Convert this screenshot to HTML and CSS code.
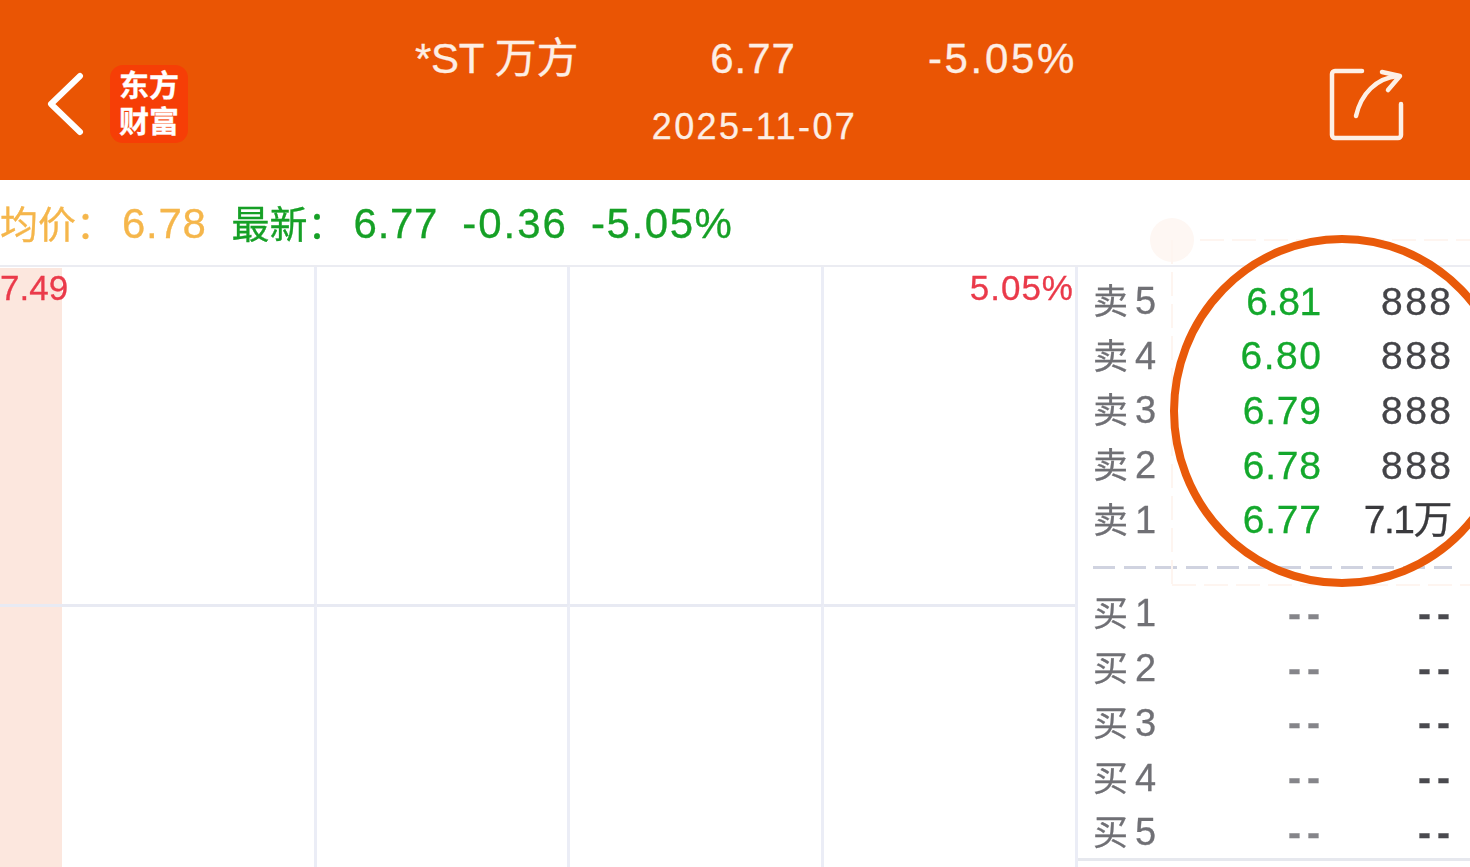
FILE: index.html
```html
<!DOCTYPE html>
<html lang="zh-CN">
<head>
<meta charset="utf-8">
<title>*ST万方</title>
<link rel="stylesheet" href="styles.css">
</head>
<body>
<div class="page">
  <header class="topbar">
    <svg class="back" viewBox="0 0 40 64" aria-hidden="true"><path d="M34 4 L5 32 L34 60"/></svg>
    <div class="logo"><span>东方</span><span>财富</span></div>
    <div class="headline">
      <div class="quote">
        <span class="q-name">*ST 万方</span>
        <span class="q-price">6.77</span>
        <span class="q-change">-5.05%</span>
      </div>
      <div class="q-date">2025-11-07</div>
    </div>
    <svg class="share" viewBox="0 0 80 76" aria-hidden="true">
      <path d="M36 5H9a3 3 0 0 0-3 3v61a3 3 0 0 0 3 3h63a3 3 0 0 0 3-3V38"/>
      <path d="M30 50C35 28 50 12 72 10"/>
      <path d="M56 6L74 10L62 24"/>
    </svg>
  </header>

  <div class="infobar">
    <span class="avg label">均价<span class="colon">：</span></span><span class="avg avg-v">6.78</span>
    <span class="latest label l-label">最新<span class="colon">：</span></span><span class="latest l-v1">6.77</span><span class="latest l-v2">-0.36</span><span class="latest l-v3">-5.05%</span>
  </div>

  <main class="body">
    <section class="chart">
      <div class="band"></div>
      <span class="axis axis-left">7.49</span>
      <span class="axis axis-right">5.05%</span>
      <div class="cell"></div><div class="cell"></div><div class="cell"></div><div class="cell last"></div>
      <div class="cell low"></div><div class="cell low"></div><div class="cell low"></div><div class="cell low last"></div>
    </section>
    <aside class="book">
      <div class="rows">
        <div class="row"><span class="lab"><i>卖</i>5</span><span class="price tight">6.81</span><span class="vol">888</span></div>
        <div class="row"><span class="lab"><i>卖</i>4</span><span class="price">6.80</span><span class="vol">888</span></div>
        <div class="row"><span class="lab"><i>卖</i>3</span><span class="price mid">6.79</span><span class="vol">888</span></div>
        <div class="row"><span class="lab"><i>卖</i>2</span><span class="price mid">6.78</span><span class="vol">888</span></div>
        <div class="row"><span class="lab"><i>卖</i>1</span><span class="price mid">6.77</span><span class="vol dark">7.1万</span></div>
      </div>
      <div class="divider"></div>
      <div class="rows">
        <div class="row"><span class="lab"><i>买</i>1</span><span class="price none">--</span><span class="vol none">--</span></div>
        <div class="row"><span class="lab"><i>买</i>2</span><span class="price none">--</span><span class="vol none">--</span></div>
        <div class="row"><span class="lab"><i>买</i>3</span><span class="price none">--</span><span class="vol none">--</span></div>
        <div class="row"><span class="lab"><i>买</i>4</span><span class="price none">--</span><span class="vol none">--</span></div>
        <div class="row"><span class="lab"><i>买</i>5</span><span class="price none">--</span><span class="vol none">--</span></div>
      </div>
      <div class="bookend"></div>
    </aside>
  </main>

  <svg class="overlay" viewBox="0 0 1470 867" aria-hidden="true">
    <circle class="ghost-dot" cx="1172" cy="240" r="22"/>
    <path class="ghost-line" d="M1172 240V590M1200 240H1470M1172 585H1470"/>
    <ellipse class="ring" cx="1342" cy="411" rx="168" ry="172"/>
  </svg>
</div>
</body>
</html>
```

FILE: styles.css
```css
* { box-sizing: border-box; }
html, body { margin: 0; padding: 0; }
html { background: linear-gradient(#ea5504 0 180px, #fff 180px); }
body { overflow: hidden; }
.page {
  position: relative;
  width: 1470px;
  height: 867px;
  overflow: hidden;
  font-family: "Liberation Sans", "Noto Sans CJK SC", sans-serif;
  -webkit-text-stroke: 0.3px currentColor;
  filter: blur(0.7px);
}

.topbar {
  height: 180px;
  background: #ea5504;
  display: flex;
  align-items: center;
  padding-left: 46px;
  color: #fff;
}
.back { width: 40px; height: 64px; margin-top: 28px; flex: none; }
.back path { fill: none; stroke: #fff; stroke-width: 6; stroke-linecap: round; stroke-linejoin: round; }
.logo {
  flex: none;
  width: 78px;
  height: 78px;
  margin-left: 24px;
  margin-top: 28px;
  border-radius: 13px;
  background: #f63e06;
  display: flex;
  flex-direction: column;
  align-items: center;
  justify-content: center;
  font-size: 30px;
  line-height: 36px;
  font-weight: 700;
}
.logo span { display: block; }
.headline {
  flex: 1;
  margin-right: 8px;
  margin-top: 16px;
  display: flex;
  flex-direction: column;
  align-items: stretch;
}
.quote {
  display: grid;
  grid-template-columns: 1fr auto 1fr;
  column-gap: 134px;
  font-size: 42px;
  line-height: 50px;
  color: #fdeee4;
  margin-top: -13px;
}
.q-name { justify-self: end; margin-right: -2px; letter-spacing: -0.3px; }
.q-price { letter-spacing: 1px; }
.q-change { justify-self: start; letter-spacing: 2.7px; margin-left: -2px; }
.q-date {
  text-align: center;
  font-size: 36px;
  line-height: 44px;
  margin-top: 21px;
  padding-left: 3px;
  letter-spacing: 2.4px;
  color: #fdeee4;
}
.share { flex: none; width: 80px; height: 76px; margin-right: 64px; margin-top: 28px; }
.share path { fill: none; stroke: #fdf0e6; stroke-width: 4.5; stroke-linecap: round; stroke-linejoin: round; }

.infobar {
  height: 87px;
  padding-top: 2px;
  border-bottom: 2px solid #ebecf2;
  display: flex;
  align-items: center;
  font-size: 42px;
  white-space: nowrap;
}
.label { font-size: 38px; margin-top: -5px; }
.colon { font-family: "Noto Sans CJK TC", sans-serif; }
.avg { color: #f5b64b; }
.avg-v { margin-left: 8px; letter-spacing: 0.7px; }
.latest { color: #16a026; }
.l-label { margin-left: 25px; }
.l-v1 { margin-left: 8px; letter-spacing: 0.7px; }
.l-v2 { margin-left: 24px; letter-spacing: 2px; }
.l-v3 { margin-left: 23px; letter-spacing: 1.6px; }

.body { display: flex; height: 600px; }
.chart {
  position: relative;
  width: 1075px;
  flex: none;
  display: grid;
  grid-template-columns: 317px 253px 254px 1fr;
  grid-template-rows: 337px 1fr;
}
.cell { border-right: 3px solid #ebedf6; }
.cell.last { border-right: 0; }
.cell.low { border-top: 3px solid #e8eaf3; }
.band {
  position: absolute;
  z-index: -1;
  left: 0;
  top: 1px;
  bottom: 0;
  width: 62px;
  background: #fce7de;
}
.axis { position: absolute; top: 1px; font-size: 35px; line-height: 40px; color: #ea3a4a; }
.axis-left { left: 0; }
.axis-right { right: 1px; letter-spacing: 1px; }

.book {
  flex: 1;
  border-left: 3px solid #ebedf6;
  padding: 7px 18px 0 15px;
  display: flex;
  flex-direction: column;
}
.rows { display: flex; flex-direction: column; }
.row {
  height: 54.7px;
  display: grid;
  grid-template-columns: 66px 162px 130px;
  align-items: center;
  font-size: 39px;
  line-height: 54px;
  white-space: nowrap;
}
.lab { color: #707075; font-size: 38px; }
.lab i { font-style: normal; font-size: 35px; margin-right: 7px; }
.price { text-align: right; color: #14a82c; letter-spacing: 1.5px; margin-right: -1.5px; }
.price.mid { letter-spacing: 0.8px; margin-right: -0.8px; }
.price.tight { letter-spacing: -0.3px; margin-right: 0; }
.vol { text-align: right; color: #444448; letter-spacing: 2.4px; margin-right: -2.4px; }
.vol.dark { color: #3a3a3d; letter-spacing: -1.5px; margin-right: 0; }
.price.none { letter-spacing: 6px; margin-right: -5px; color: #85858a; font-weight: 700; }
.vol.none { letter-spacing: 6px; margin-right: -5px; color: #4a4a4f; font-weight: 700; }
.divider {
  height: 3px;
  margin-top: 19px;
  margin-bottom: 17px;
  background: repeating-linear-gradient(90deg, #d0d3e0 0 22px, transparent 22px 31px);
}
.bookend {
  margin: -2px -18px 0 -15px;
  border-top: 3px solid #e6e8ee;
}

.overlay { position: absolute; left: 0; top: 0; width: 1470px; height: 867px; pointer-events: none; }
.ghost-dot { fill: #fef7f3; }
.ghost-line { fill: none; stroke: #fef5f0; stroke-width: 2; stroke-dasharray: 24 8; }
.ring { fill: none; stroke: #e95a0a; stroke-width: 8; }
```
